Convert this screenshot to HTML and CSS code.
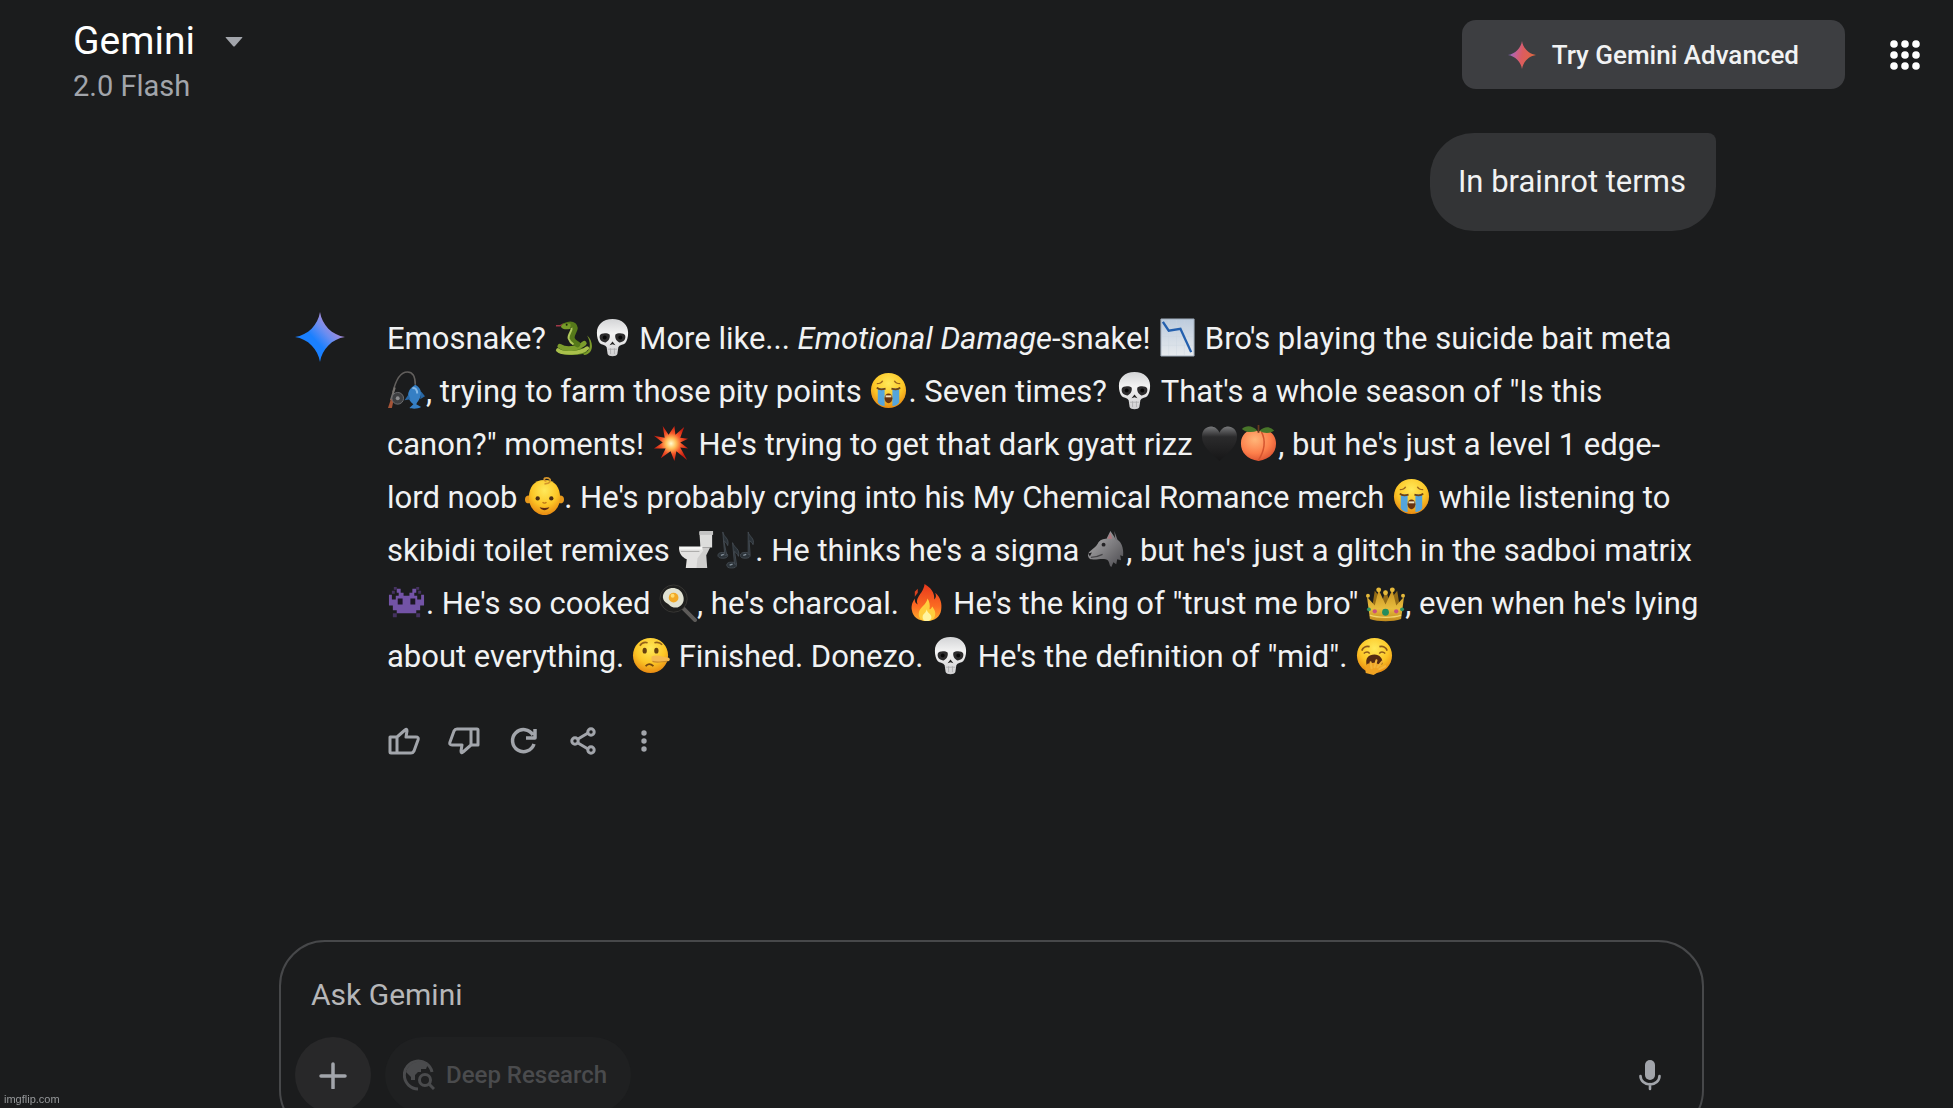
FILE: index.html
```html
<!DOCTYPE html>
<html lang="en">
<head>
    <meta charset="UTF-8">
    <meta name="viewport" content="width=device-width, initial-scale=1">
    <title>Gemini</title>
    <link rel="stylesheet" href="styles.css">
</head>
<body>
    <!-- Emoji and icon shapes -->
    <svg class="sprite" aria-hidden="true">
        <defs>
            <radialGradient id="face-fill" cx="50%" cy="30%" r="70%">
                <stop offset="0" stop-color="#ffe95a"/>
                <stop offset="0.6" stop-color="#fcc626"/>
                <stop offset="1" stop-color="#e88a12"/>
            </radialGradient>
            <linearGradient id="bone-fill" x1="0" y1="0" x2="0" y2="1">
                <stop offset="0" stop-color="#d3d4d6"/>
                <stop offset="0.4" stop-color="#f4f4f4"/>
                <stop offset="1" stop-color="#cfcfd1"/>
            </linearGradient>
            <linearGradient id="paper-fill" x1="0" y1="0" x2="0" y2="1">
                <stop offset="0" stop-color="#bccbdd"/>
                <stop offset="1" stop-color="#e8ebee"/>
            </linearGradient>
            <radialGradient id="blast-fill">
                <stop offset="0" stop-color="#fffbd0"/>
                <stop offset="0.3" stop-color="#ffc05a"/>
                <stop offset="0.6" stop-color="#f4572a"/>
                <stop offset="1" stop-color="#c81c10"/>
            </radialGradient>
            <linearGradient id="heart-fill" x1="0" y1="0" x2="0" y2="1">
                <stop offset="0" stop-color="#77787a"/>
                <stop offset="0.3" stop-color="#2b2b2c"/>
                <stop offset="1" stop-color="#161617"/>
            </linearGradient>
            <radialGradient id="peach-fill" cx="40%" cy="30%" r="75%">
                <stop offset="0" stop-color="#ffb679"/>
                <stop offset="0.6" stop-color="#fd7f4b"/>
                <stop offset="1" stop-color="#d94f30"/>
            </radialGradient>
            <linearGradient id="fur-fill" x1="0" y1="0" x2="1" y2="1">
                <stop offset="0" stop-color="#b5b4b6"/>
                <stop offset="1" stop-color="#4c4b4f"/>
            </linearGradient>
            <linearGradient id="flame-fill" x1="0" y1="0" x2="0" y2="1">
                <stop offset="0" stop-color="#e8381c"/>
                <stop offset="0.6" stop-color="#fb6a22"/>
                <stop offset="1" stop-color="#ffb02c"/>
            </linearGradient>
            <linearGradient id="gold-fill" x1="0" y1="0" x2="0" y2="1">
                <stop offset="0" stop-color="#c79220"/>
                <stop offset="0.6" stop-color="#e8bd3e"/>
                <stop offset="1" stop-color="#c08a1c"/>
            </linearGradient>
            <linearGradient id="spark-blue" x1="0.2" y1="0.7" x2="0.8" y2="0.15">
                <stop offset="0.3" stop-color="#1a80ff"/>
                <stop offset="0.6" stop-color="#6a8df0"/>
                <stop offset="1" stop-color="#c58bd0"/>
            </linearGradient>
            <linearGradient id="spark-red" x1="0" y1="0.4" x2="1" y2="0.6">
                <stop offset="0.05" stop-color="#8e6cc9"/>
                <stop offset="0.3" stop-color="#c9608f"/>
                <stop offset="0.5" stop-color="#dc5c60"/>
                <stop offset="1" stop-color="#e0693c"/>
            </linearGradient>
        </defs>

        <symbol id="snake" viewBox="0 0 40 40">
            <path d="M2 8l4 0 4-2" fill="none" stroke="#a03848" stroke-width="1.5"/>
            <path d="M29 36c8 0 10-9 5-18 7 6 7 19-3 20z" fill="#7d9b2a"/>
            <ellipse cx="19" cy="34" rx="15" ry="4" fill="#54791b"/>
            <path d="M4 33c4 4 24 4 30-2" fill="none" stroke="#a9c04b" stroke-width="4" stroke-linecap="round"/>
            <path d="M6 29c6 4 18 3 25-3" fill="none" stroke="#7c9d2c" stroke-width="5" stroke-linecap="round"/>
            <path d="M11 8c9-4 12 1 9 6-3 6-3 9 4 13" fill="none" stroke="#56791a" stroke-width="6" stroke-linecap="round"/>
            <path d="M18 10c1 3-4 7-3 11 1 3 3 5 5 6" fill="none" stroke="#b0c95c" stroke-width="2"/>
            <path d="M7 9c1-3 6-4 10-3l0 5c-4 1-8 1-10-2z" fill="#789b29"/>
            <circle cx="13" cy="7" r="1" fill="#1c220c"/>
        </symbol>
        <symbol id="skull" viewBox="0 0 40 40">
            <path d="M20 1C10 1 4 7 4 15c0 5 1 8 3 11 2 2 5 1 7 4l1 7c1 3 9 3 10 0l1-7c2-3 5-2 7-4 2-3 3-6 3-11C36 7 30 1 20 1z" fill="url(#bone-fill)"/>
            <path d="M7 18c1-3 8-3 10-1 1 3-1 7-4 8-4 0-7-3-6-7zM33 18c-1-3-8-3-10-1-1 3 1 7 4 8 4 0 7-3 6-7z" fill="#2c2b2c"/>
            <circle cx="12" cy="20" r="2" fill="#080808"/>
            <circle cx="28" cy="20" r="2" fill="#080808"/>
            <path d="M20 24l-3 4 3-1 3 1z" fill="#222"/>
            <path d="M15 32h10M18 31v6M22 31v6" stroke="#a9a9ab" stroke-width="0.8" fill="none"/>
        </symbol>
        <symbol id="chart" viewBox="0 0 40 40">
            <path d="M3 1h34v38H3z" fill="url(#paper-fill)" stroke="#9eabb9"/>
            <path d="M11 2v36M19 2v36M27 2v36M4 10h32M4 19h32M4 28h32" stroke="#ccd6e1" stroke-width="0.4"/>
            <path d="M5 4l6 9 12-2 11 24" fill="none" stroke="#2460ae" stroke-width="2.4"/>
        </symbol>
        <symbol id="fishing" viewBox="0 0 40 40">
            <path d="M6 22C9 9 14 1 21 1c5 0 8 4 8 13" fill="none" stroke="#625f5d" stroke-width="1.6"/>
            <path d="M8 17L4 30" stroke="#77736f" stroke-width="2"/>
            <path d="M4 29l-3 9h4l2-9z" fill="#a35438"/>
            <circle cx="11" cy="28" r="6" fill="#3e3f41" stroke="#6c6d70"/>
            <circle cx="11" cy="28" r="2" fill="#8d8e90"/>
            <path d="M29 14c6 3 7 9 5 13-1 3-3 5-4 7l5 3c-3 2-9 2-12 1l4-4c-5-4-6-8-5-12 1-4 4-6 7-8z" fill="#357fc4"/>
            <path d="M22 24l-4 6 6-1zM35 21l4 5-5 3z" fill="#2867a4"/>
            <path d="M26 18c3-2 5 2 5 5" fill="none" stroke="#84b8e6" stroke-width="2"/>
        </symbol>
        <symbol id="sob" viewBox="0 0 40 40">
            <circle cx="20" cy="20" r="18" fill="url(#face-fill)"/>
            <path d="M9 18h7v18c-3 0-6-2-7-4zM24 18h7v14c-1 2-4 4-7 4z" fill="#55a5dc"/>
            <path d="M8 17c2 2 6 2 9 1M32 17c-2 2-6 2-9 1" fill="none" stroke="#704313" stroke-width="1.8"/>
            <path d="M8 13c3 0 5-1 6-3M32 13c-3 0-5-1-6-3" fill="none" stroke="#9a641c" stroke-width="1.4"/>
            <ellipse cx="20" cy="28" rx="4" ry="5" fill="#68320e"/>
            <path d="M17 25h6v2h-6z" fill="#f3e2bb"/>
        </symbol>
        <symbol id="boom" viewBox="0 0 40 40">
            <path d="M11 2l6 9 6-9 1 9 9-8-4 11 8 1-8 4 8 6-8-1 7 13-11-9-2 10-4-10-10 7 5-10-12 0 9-6L2 12l11 2z" fill="url(#blast-fill)"/>
        </symbol>
        <symbol id="blackheart" viewBox="0 0 40 40">
            <path d="M20 38C12 30 2 23 2 13 2 1 16-1 20 9 24-1 38 1 38 13c0 10-10 17-18 25z" fill="url(#heart-fill)"/>
        </symbol>
        <symbol id="peach" viewBox="0 0 40 40">
            <path d="M20 38C8 36 2 29 2 20 2 8 13 4 20 8c7-4 18 0 18 12 0 9-6 16-18 18z" fill="url(#peach-fill)"/>
            <path d="M23 8c5 9 3 20-3 29" fill="none" stroke="#d5532e" stroke-width="1.5"/>
            <path d="M19 7C14 1 7 1 3 5c5 4 10 4 16 2zM21 7c5-5 11-5 15 0-5 3-10 3-15 0z" fill="#487529"/>
            <path d="M20 9V1" stroke="#67391e" stroke-width="1.8"/>
        </symbol>
        <symbol id="baby" viewBox="0 0 40 40">
            <circle cx="4" cy="23" r="4" fill="#e7981b"/>
            <circle cx="36" cy="23" r="4" fill="#e7981b"/>
            <path d="M20 3C9 3 4 11 4 21c0 10 7 18 16 18s16-8 16-18C36 11 31 3 20 3z" fill="url(#face-fill)"/>
            <path d="M20 7c7 0 8-6 2-6-3 0-3 3 0 3" fill="none" stroke="#d3942c" stroke-width="1.8"/>
            <circle cx="13" cy="22" r="2.2" fill="#4c2e12"/>
            <circle cx="27" cy="22" r="2.2" fill="#4c2e12"/>
            <path d="M18 26c1 1 3 1 4 0" fill="none" stroke="#bd7618" stroke-width="1.4"/>
            <path d="M15 31c3 1 7 1 10 0-2 4-8 4-10 0z" fill="#5b2a12"/>
        </symbol>
        <symbol id="toilet" viewBox="0 0 40 40">
            <path d="M23 2l13-1v17H24z" fill="#dddddc"/>
            <path d="M23 1h14v4H23z" fill="#c4c4c4"/>
            <path d="M24 18h10l-4 8 1 13H19l2-15z" fill="#cfcecd"/>
            <path d="M2 18h23l2 3-6 8-1 10H9l1-9C5 28 2 24 2 18z" fill="#e3e2e1"/>
            <path d="M2 17h24v3H3z" fill="#f6f6f5"/>
            <path d="M4 22h19" stroke="#aaa9a8" stroke-width="1"/>
        </symbol>
        <symbol id="notes" viewBox="0 0 40 40">
            <g fill="#2b3238" stroke="#485057" stroke-width="0.8">
                <ellipse cx="7" cy="26" rx="5" ry="3"/>
                <path d="M9 26L7 2c1 6 7 6 5 14-1-3-3-4-4-5l3 15z"/>
                <ellipse cx="16" cy="36" rx="5" ry="3"/>
                <path d="M19 35l-2-22c2 6 8 6 6 14-1-3-3-4-4-5l2 13z"/>
                <ellipse cx="30" cy="26" rx="5" ry="3"/>
                <path d="M33 25V2c1 5 7 6 5 13-1-3-3-3-4-4l1 14z"/>
            </g>
            <path d="M5 26l3-1M14 36l3-1M28 26l3-1" stroke="#87939d" stroke-width="1.5"/>
        </symbol>
        <symbol id="wolf" viewBox="0 0 40 40">
            <path d="M1 25c1-4 7-6 10-11 2-4 6-5 9-5l4-8 4 6 1 2c6 2 9 9 8 18l-3-1 1 5-4-1-1 5-3-2-2 5c-3-2-1-7-6-8-5-1-10 1-14 0-3 0-4-3-4-5z" fill="url(#fur-fill)"/>
            <path d="M29 10l-1-9 4 11z" fill="#77767a"/>
            <path d="M21 9l3-6 2 6z" fill="#b07a80"/>
            <circle cx="17" cy="15" r="2" fill="#232225"/>
            <path d="M1 24l4-1-2 4z" fill="#1b1a1c"/>
            <path d="M4 28c5 0 8-1 12-3" fill="none" stroke="#444346" stroke-width="1.2"/>
        </symbol>
        <symbol id="alien" viewBox="0 0 40 40">
            <path d="M10 6h4v4h3v3h6v-3h3V6h4v4h-2v3h3v4h4v-5h3v11h-4v5h-4v3H10v-3H6v-5H2V12h3v5h4v-4h3v-3h-2z" fill="#7353a6"/>
            <path d="M7 4h3v3H7zM30 4h3v3h-3zM5 8h3v3H5zM32 8h3v3h-3zM6 31h4v4H6zM30 31h4v4h-4z" fill="#453260"/>
            <path d="M11 16h5v6h-5zM24 16h5v6h-5z" fill="#1d1725"/>
        </symbol>
        <symbol id="pan" viewBox="0 0 40 40">
            <path d="M26 26l12 12" stroke="#5d5b59" stroke-width="4" stroke-linecap="round"/>
            <circle cx="16" cy="16" r="14" fill="#1f1f1e" stroke="#363533"/>
            <path d="M9 7c6-4 14-1 16 4 3 6 1 12-5 14-7 1-8-3-12-5-5-4-3-10 1-13z" fill="#e1e2d2"/>
            <circle cx="16" cy="15" r="5" fill="#f2a926"/>
            <circle cx="15" cy="13" r="2" fill="#ffdc70"/>
        </symbol>
        <symbol id="fire" viewBox="0 0 40 40">
            <path d="M18 1c10 6 10 12 10 16 2-2 2-4 1-7 6 5 7 12 6 18-1 7-7 11-15 11S6 35 5 28c-1-5 1-9 3-12 0 4 1 5 3 6C8 14 17 11 18 1z" fill="url(#flame-fill)"/>
            <path d="M21 16c-1 7-9 9-9 16 0 5 4 7 8 7 5 0 9-2 9-8 0-3-2-5-3-7-1 2-2 3-3 3 1-4 0-8-2-11z" fill="#ffce3d"/>
            <path d="M20 27c0 4-4 4-4 8 0 3 2 4 4 4s5-1 5-4-4-4-5-8z" fill="#fff4a0"/>
            <path d="M8 9l3-3 0 4-3 4z" fill="#d7401f"/>
        </symbol>
        <symbol id="crown" viewBox="0 0 40 40">
            <path d="M6 27l3-19 8 10 3-11 4 11 8-10 3 19z" fill="#946c17"/>
            <path d="M1 14l8 9 4-16 7 15 7-15 4 16 8-9-3 23c-8 3-24 3-32 0z" fill="url(#gold-fill)"/>
            <path d="M4 33c8 3 24 3 32 0" fill="none" stroke="#f2d469" stroke-width="1.5"/>
            <g fill="#e5b93b">
                <circle cx="2" cy="13" r="2"/>
                <circle cx="13" cy="7" r="2.5"/>
                <circle cx="27" cy="7" r="2.5"/>
                <circle cx="38" cy="13" r="2"/>
                <circle cx="20" cy="10" r="2.5"/>
            </g>
            <circle cx="20" cy="30" r="3.5" fill="#248c5d"/>
            <circle cx="9" cy="29" r="2.2" fill="#ca527d"/>
            <circle cx="31" cy="29" r="2.2" fill="#ca527d"/>
            <circle cx="3" cy="27" r="2" fill="#2f9365"/>
            <circle cx="37" cy="27" r="2" fill="#2f9365"/>
        </symbol>
        <symbol id="lying" viewBox="0 0 40 40">
            <circle cx="19" cy="20" r="18" fill="url(#face-fill)"/>
            <ellipse cx="13" cy="15" rx="2.2" ry="3" fill="#65400f"/>
            <ellipse cx="25" cy="15" rx="2.2" ry="3" fill="#65400f"/>
            <path d="M8 10c2-3 5-4 8-3M23 7c3-1 6 0 8 2" fill="none" stroke="#94621a" stroke-width="1.6"/>
            <path d="M20 21c6-3 12 1 17 1 3 1 2 4-1 4-6 0-12 3-16-1z" fill="#f5b94f"/>
            <path d="M21 26c5 2 10 0 15 0" fill="none" stroke="#c98a28" stroke-width="1.2"/>
            <path d="M14 31c2-3 5-3 8 0" fill="none" stroke="#764811" stroke-width="1.8"/>
        </symbol>
        <symbol id="yawn" viewBox="0 0 40 40">
            <circle cx="20" cy="20" r="18" fill="url(#face-fill)"/>
            <path d="M7 15c1-3 4-5 8-4M33 15c-1-3-4-5-8-4" fill="none" stroke="#8d591a" stroke-width="1.8"/>
            <path d="M9 18c2-2 5-2 6 0M31 18c-2-2-5-2-6 0" fill="none" stroke="#8d591a" stroke-width="1.5"/>
            <path d="M12 30c-2-7 2-11 8-11 5 0 9 4 8 10z" fill="#542a13"/>
            <path d="M11 38c-1-7 1-10 4-10 4-1 7-1 9 1 4 4 0 9-5 11z" fill="#f0a323"/>
            <path d="M17 33l-1-6M20 32l2-7M23 32l5-6M25 34l6-3" stroke="#f3b43a" stroke-width="2.2" stroke-linecap="round"/>
        </symbol>
        <symbol id="sparkle" viewBox="0 0 50 50">
            <path d="M25 0c2 13 12 23 25 25-13 2-23 12-25 25C23 37 13 27 0 25 13 23 23 13 25 0z"/>
        </symbol>
    </svg>

    <header class="topbar">
        <button class="model" type="button">
            <span class="model-name">Gemini
                <svg class="caret" viewBox="0 0 18 10"><path d="M1 0h16q1 0 0 1L10 9q-1 1-2 0L1 1q-1-1 0-1z" fill="currentColor"/></svg>
            </span>
            <span class="model-version">2.0 Flash</span>
        </button>
        <div class="topbar-actions">
            <button class="upgrade" type="button">
                <svg class="upgrade-icon" fill="url(#spark-red)"><use href="#sparkle"/></svg>
                Try Gemini Advanced
            </button>
            <button class="apps" type="button" aria-label="Google apps">
                <svg width="32" height="32" viewBox="0 0 32 32" fill="#fff">
                    <circle cx="5" cy="5" r="3.8"/><circle cx="16" cy="5" r="3.8"/><circle cx="27" cy="5" r="3.8"/>
                    <circle cx="5" cy="16" r="3.8"/><circle cx="16" cy="16" r="3.8"/><circle cx="27" cy="16" r="3.8"/>
                    <circle cx="5" cy="27" r="3.8"/><circle cx="16" cy="27" r="3.8"/><circle cx="27" cy="27" r="3.8"/>
                </svg>
            </button>
        </div>
    </header>

    <main class="chat">
        <p class="question">In brainrot terms</p>

        <div class="answer">
            <svg class="answer-icon" fill="url(#spark-blue)"><use href="#sparkle"/></svg>
            <div class="answer-body">
                <p class="answer-text">
                    Emosnake? <svg class="emoji" role="img" aria-label="snake"><use href="#snake"/></svg><svg class="emoji" role="img" aria-label="skull"><use href="#skull"/></svg> More like... <em>Emotional Damage</em>-snake! <svg class="emoji" role="img" aria-label="chart decreasing"><use href="#chart"/></svg> Bro's playing the suicide bait meta<br>
                    <svg class="emoji" role="img" aria-label="fishing pole"><use href="#fishing"/></svg>, trying to farm those pity points <svg class="emoji" role="img" aria-label="loudly crying face"><use href="#sob"/></svg>. Seven times? <svg class="emoji" role="img" aria-label="skull"><use href="#skull"/></svg> That's a whole season of "Is this<br>
                    canon?" moments! <svg class="emoji" role="img" aria-label="collision"><use href="#boom"/></svg> He's trying to get that dark gyatt rizz <svg class="emoji" role="img" aria-label="black heart"><use href="#blackheart"/></svg><svg class="emoji" role="img" aria-label="peach"><use href="#peach"/></svg>, but he's just a level 1 edge-<br>
                    lord noob <svg class="emoji" role="img" aria-label="baby"><use href="#baby"/></svg>. He's probably crying into his My Chemical Romance merch <svg class="emoji" role="img" aria-label="loudly crying face"><use href="#sob"/></svg> while listening to<br>
                    skibidi toilet remixes <svg class="emoji" role="img" aria-label="toilet"><use href="#toilet"/></svg><svg class="emoji" role="img" aria-label="musical notes"><use href="#notes"/></svg>. He thinks he's a sigma <svg class="emoji" role="img" aria-label="wolf"><use href="#wolf"/></svg>, but he's just a glitch in the sadboi matrix<br>
                    <svg class="emoji" role="img" aria-label="alien monster"><use href="#alien"/></svg>. He's so cooked <svg class="emoji" role="img" aria-label="cooking"><use href="#pan"/></svg>, he's charcoal. <svg class="emoji" role="img" aria-label="fire"><use href="#fire"/></svg> He's the king of "trust me bro" <svg class="emoji" role="img" aria-label="crown"><use href="#crown"/></svg>, even when he's lying<br>
                    about everything. <svg class="emoji" role="img" aria-label="lying face"><use href="#lying"/></svg> Finished. Donezo. <svg class="emoji" role="img" aria-label="skull"><use href="#skull"/></svg> He's the definition of "mid". <svg class="emoji" role="img" aria-label="yawning face"><use href="#yawn"/></svg>
                </p>
                <div class="feedback">
                    <button type="button" aria-label="Good response">
                        <svg viewBox="0 0 32 28"><path d="M2 10h7v16H3q-1 0-1-1zM9 10l8-7q2-2 2 1l-1 6h10q3 0 2 3l-4 11q-1 2-3 2H9"/></svg>
                    </button>
                    <button type="button" aria-label="Bad response">
                        <svg viewBox="0 0 32 28"><path d="M30 18h-7V2h6q1 0 1 1zM23 18l-8 7q-2 2-2-1l1-6H4q-3 0-2-3L6 4q1-2 3-2h14"/></svg>
                    </button>
                    <button type="button" aria-label="Redo">
                        <svg viewBox="0 0 32 28"><path d="M26 17a11 11 0 1 1-1-9M27 2v9h-9" stroke-width="3.5"/></svg>
                    </button>
                    <button type="button" aria-label="Share">
                        <svg viewBox="0 0 32 28"><path d="M10 12l10-6M10 16l10 6"/><circle cx="7" cy="14" r="3.2"/><circle cx="23" cy="5" r="3.2"/><circle cx="23" cy="23" r="3.2"/></svg>
                    </button>
                    <button type="button" aria-label="More">
                        <svg viewBox="0 0 32 28"><g fill="currentColor" stroke="none"><circle cx="16" cy="6" r="2.7"/><circle cx="16" cy="14" r="2.7"/><circle cx="16" cy="22" r="2.7"/></g></svg>
                    </button>
                </div>
            </div>
        </div>
    </main>

    <form class="composer">
        <input class="prompt" type="text" placeholder="Ask Gemini" aria-label="Ask Gemini">
        <div class="tools">
            <button class="add" type="button" aria-label="Add files">
                <svg width="28" height="28" viewBox="0 0 28 28"><path d="M14 3v24M2 15h24" stroke="currentColor" stroke-width="3.5" stroke-linecap="round"/></svg>
            </button>
            <button class="research" type="button">
                <svg width="32" height="32" viewBox="0 0 32 32" fill="none" stroke="currentColor" stroke-width="3">
                    <path d="M15 30A14 14 0 1 1 29 13"/>
                    <path d="M3 13l5 5v3h4v-5l3-3h3v-3h5l2-5C18 0 6 2 3 13z" fill="currentColor" stroke="none"/>
                    <circle cx="22" cy="21" r="5.5"/><path d="M26 25l5 5"/>
                </svg>
                Deep Research
            </button>
            <button class="mic" type="button" aria-label="Use microphone">
                <svg width="24" height="32" viewBox="0 0 24 32"><rect x="7" y="1" width="10" height="20" rx="5" fill="currentColor"/><path d="M2.5 17a9.500 8.500 0 0 0 19 0M12 25v5" fill="none" stroke="currentColor" stroke-width="2.6" stroke-linecap="round"/></svg>
            </button>
        </div>
    </form>

    <div class="watermark">imgflip.com</div>
</body>
</html>
```
FILE: styles.css
```css
* {
    box-sizing: border-box;
}

body {
    margin: 0;
    height: 100vh;
    overflow: hidden;
    background: #1b1c1d;
    color: #f1f2f3;
    font-family: Roboto, 'Liberation Sans', sans-serif;
    font-size: 30px;
}

button {
    padding: 0;
    border: none;
    background: none;
    color: #a2a5ab;
    font: inherit;
    cursor: pointer;
}

p {
    margin: 0;
}

.sprite {
    position: absolute;
    width: 0;
    height: 0;
}

/* Top bar */
.topbar {
    display: flex;
    justify-content: space-between;
    align-items: flex-start;
    height: 133px;
    padding: 20px 32px 0 73px;
}

.model {
    display: flex;
    flex-direction: column;
    text-align: left;
}

.model-name {
    display: flex;
    align-items: center;
    gap: 30px;
    color: #fff;
    font-size: 39px;
    line-height: 43px;
}

.caret {
    width: 18px;
    height: 10px;
    color: #a2a5ab;
}

.model-version {
    font-size: 29px;
    line-height: 46px;
}

.topbar-actions {
    display: flex;
    align-items: center;
    gap: 44px;
}

.upgrade {
    display: flex;
    align-items: center;
    gap: 16px;
    height: 69px;
    padding: 0 46px;
    border-radius: 14px;
    background: #3d3e41;
    color: #f1f2f3;
    font-size: 26px;
    font-weight: 500;
}

.upgrade-icon {
    width: 28px;
    height: 30px;
}

.apps {
    display: flex;
}

/* Conversation */
.chat {
    height: 807px;
    padding: 0 237px 0 295px;
}

.question {
    width: fit-content;
    margin-left: auto;
    padding: 22px 30px 23px 28px;
    border-radius: 44px 8px 44px 44px;
    background: #333436;
    font-size: 31px;
    line-height: 53px;
}

.answer {
    display: flex;
    gap: 42px;
    margin-top: 81px;
}

.answer-icon {
    flex: none;
    width: 50px;
    height: 50px;
}

.answer-text {
    font-size: 31px;
    line-height: 53px;
    white-space: nowrap;
}

.emoji {
    width: 39px;
    height: 39px;
    vertical-align: -8px;
}

.feedback {
    display: flex;
    margin: 28px 0 0 -13px;
}

.feedback button {
    display: flex;
    justify-content: center;
    align-items: center;
    width: 60px;
    height: 60px;
}

.feedback svg {
    width: 32px;
    height: 28px;
    fill: none;
    stroke: currentColor;
    stroke-width: 3;
    stroke-linejoin: round;
}

/* Prompt box */
.composer {
    margin: 0 249px 0 279px;
    height: 196px;
    padding: 24px 14px 14px;
    border: 2px solid #47484a;
    border-radius: 46px;
}

.prompt {
    display: block;
    width: 100%;
    height: 56px;
    padding: 0 16px;
    border: none;
    outline: none;
    background: none;
    color: #f1f2f3;
    font: inherit;
}

.prompt::placeholder {
    color: #b6b7b9;
    opacity: 1;
}

.tools {
    display: flex;
    align-items: center;
    gap: 14px;
    margin-top: 15px;
}

.add {
    display: flex;
    justify-content: center;
    align-items: center;
    width: 76px;
    height: 76px;
    border-radius: 50%;
    background: #282829;
}

.research {
    display: flex;
    align-items: center;
    gap: 11px;
    height: 76px;
    padding: 0 24px 0 18px;
    border-radius: 38px;
    background: #1f2021;
    color: #4a4b4d;
    font-size: 24px;
    font-weight: 500;
}

.mic {
    display: flex;
    margin: 0 26px 0 auto;
}

.watermark {
    position: fixed;
    left: 4px;
    bottom: 2px;
    color: #96989a;
    font-family: 'Liberation Sans', Arial, sans-serif;
    font-size: 11px;
    line-height: 14px;
}
```
